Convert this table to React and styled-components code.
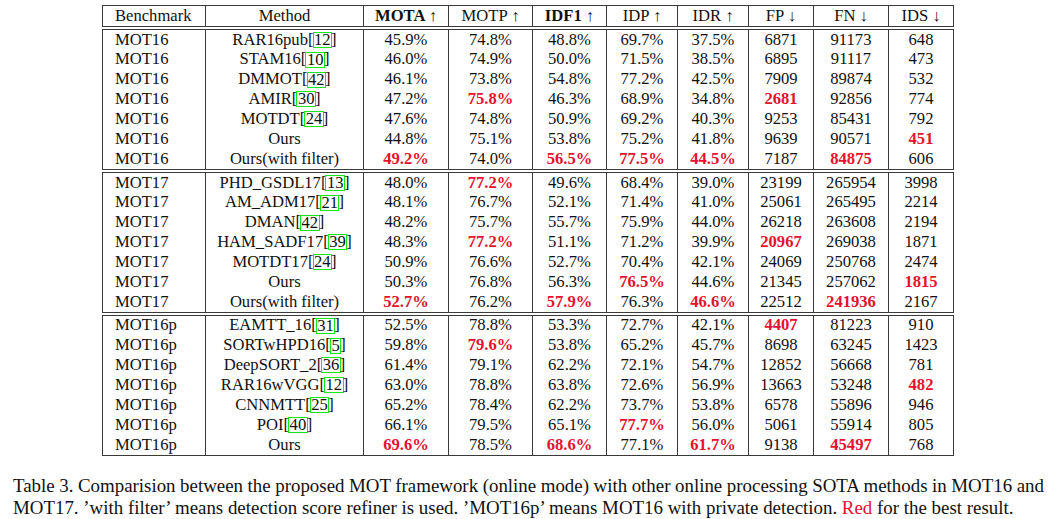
import React from 'react';
import styled, { createGlobalStyle } from 'styled-components';

const GlobalStyle = createGlobalStyle`
  body {
    margin: 0;
    background: #fff;
    color: #111;
    font-family: "Liberation Serif", "Times New Roman", serif;
  }
`;

const COLS = '102px 158px 85px 84px 74px 71px 71px 65px 75px 65px';

const Page = styled.div`
  width: 1060px;
  height: 519px;
  padding: 5px 0 0 0;
  box-sizing: border-box;
  overflow: hidden;
`;

const Table = styled.div`
  margin-left: 102px;
  width: 852px;
  display: flex;
  flex-direction: column;
  gap: 2px;
`;

const Block = styled.div`
  border: 1px solid #3a3a3a;
`;

const Row = styled.div`
  display: grid;
  grid-template-columns: ${COLS};
  height: ${(p) => (p.head ? '20px' : '19.85px')};
`;

const Cell = styled.div`
  display: flex;
  align-items: center;
  justify-content: ${(p) => (p.left ? 'flex-start' : 'center')};
  padding-left: ${(p) => (p.left ? '12px' : '0')};
  border-left: ${(p) => (p.first ? 'none' : '1px solid #3a3a3a')};
  font-size: 16.6px;
  line-height: 1;
  white-space: nowrap;
  font-weight: ${(p) => (p.bold ? 700 : 400)};
  color: ${(p) => (p.best ? '#e3122e' : '#111')};
`;

const Cite = styled.span`
  border: 1px solid #19e619;
  padding: 0 0.5px;
  margin: 0 -1px;
  line-height: 14px;
`;

const Caption = styled.div`
  margin: 19px 0 0 13px;
  width: 1031px;
  font-size: 18.9px;
  color: #111;
`;

const Line = styled.div`
  line-height: 22px;
  white-space: nowrap;
  word-spacing: ${(p) => (p.justify ? '-1.5px' : '0')};
  text-align: ${(p) => (p.justify ? 'justify' : 'left')};
  text-align-last: ${(p) => (p.justify ? 'justify' : 'left')};
`;

const Red = styled.span`
  color: #e3122e;
`;

const HEAD = [
  ['Benchmark', false],
  ['Method', false],
  ['MOTA ↑', true],
  ['MOTP ↑', false],
  ['IDF1 ↑', true],
  ['IDP ↑', false],
  ['IDR ↑', false],
  ['FP ↓', false],
  ['FN ↓', false],
  ['IDS ↓', false],
];

// '*' prefix marks the best value (red bold)
const SECTIONS = [
  [
    ['MOT16', 'RAR16pub', '12', '45.9%', '74.8%', '48.8%', '69.7%', '37.5%', '6871', '91173', '648'],
    ['MOT16', 'STAM16', '10', '46.0%', '74.9%', '50.0%', '71.5%', '38.5%', '6895', '91117', '473'],
    ['MOT16', 'DMMOT', '42', '46.1%', '73.8%', '54.8%', '77.2%', '42.5%', '7909', '89874', '532'],
    ['MOT16', 'AMIR', '30', '47.2%', '*75.8%', '46.3%', '68.9%', '34.8%', '*2681', '92856', '774'],
    ['MOT16', 'MOTDT', '24', '47.6%', '74.8%', '50.9%', '69.2%', '40.3%', '9253', '85431', '792'],
    ['MOT16', 'Ours', '', '44.8%', '75.1%', '53.8%', '75.2%', '41.8%', '9639', '90571', '*451'],
    ['MOT16', 'Ours(with filter)', '', '*49.2%', '74.0%', '*56.5%', '*77.5%', '*44.5%', '7187', '*84875', '606'],
  ],
  [
    ['MOT17', 'PHD_GSDL17', '13', '48.0%', '*77.2%', '49.6%', '68.4%', '39.0%', '23199', '265954', '3998'],
    ['MOT17', 'AM_ADM17', '21', '48.1%', '76.7%', '52.1%', '71.4%', '41.0%', '25061', '265495', '2214'],
    ['MOT17', 'DMAN', '42', '48.2%', '75.7%', '55.7%', '75.9%', '44.0%', '26218', '263608', '2194'],
    ['MOT17', 'HAM_SADF17', '39', '48.3%', '*77.2%', '51.1%', '71.2%', '39.9%', '*20967', '269038', '1871'],
    ['MOT17', 'MOTDT17', '24', '50.9%', '76.6%', '52.7%', '70.4%', '42.1%', '24069', '250768', '2474'],
    ['MOT17', 'Ours', '', '50.3%', '76.8%', '56.3%', '*76.5%', '44.6%', '21345', '257062', '*1815'],
    ['MOT17', 'Ours(with filter)', '', '*52.7%', '76.2%', '*57.9%', '76.3%', '*46.6%', '22512', '*241936', '2167'],
  ],
  [
    ['MOT16p', 'EAMTT_16', '31', '52.5%', '78.8%', '53.3%', '72.7%', '42.1%', '*4407', '81223', '910'],
    ['MOT16p', 'SORTwHPD16', '5', '59.8%', '*79.6%', '53.8%', '65.2%', '45.7%', '8698', '63245', '1423'],
    ['MOT16p', 'DeepSORT_2', '36', '61.4%', '79.1%', '62.2%', '72.1%', '54.7%', '12852', '56668', '781'],
    ['MOT16p', 'RAR16wVGG', '12', '63.0%', '78.8%', '63.8%', '72.6%', '56.9%', '13663', '53248', '*482'],
    ['MOT16p', 'CNNMTT', '25', '65.2%', '78.4%', '62.2%', '73.7%', '53.8%', '6578', '55896', '946'],
    ['MOT16p', 'POI', '40', '66.1%', '79.5%', '65.1%', '*77.7%', '56.0%', '5061', '55914', '805'],
    ['MOT16p', 'Ours', '', '*69.6%', '78.5%', '*68.6%', '77.1%', '*61.7%', '9138', '*45497', '768'],
  ],
];

const Method = ({ name, cite }) => (
  <Cell>
    {name}
    {cite && (
      <>
        [<Cite>{cite}</Cite>]
      </>
    )}
  </Cell>
);

const DataRow = ({ row }) => {
  const [bench, name, cite, ...vals] = row;
  return (
    <Row>
      <Cell first left>
        {bench}
      </Cell>
      <Method name={name} cite={cite} />
      {vals.map((v, i) => {
        const best = v.startsWith('*');
        return (
          <Cell key={i} best={best} bold={best}>
            {best ? v.slice(1) : v}
          </Cell>
        );
      })}
    </Row>
  );
};

export default function App() {
  return (
    <Page>
      <GlobalStyle />
      <Table>
        <Block>
          <Row head>
            {HEAD.map(([label, bold], i) => (
              <Cell key={label} first={i === 0} left={i === 0} bold={bold}>
                {label}
              </Cell>
            ))}
          </Row>
        </Block>
        {SECTIONS.map((rows, s) => (
          <Block key={s}>
            {rows.map((r, i) => (
              <DataRow key={i} row={r} />
            ))}
          </Block>
        ))}
      </Table>
      <Caption>
        <Line justify>
          Table 3. Comparision between the proposed MOT framework (online mode) with other online
          processing SOTA methods in MOT16 and
        </Line>
        <Line>
          MOT17. ’with filter’ means detection score refiner is used. ’MOT16p’ means MOT16 with
          private detection. <Red>Red</Red> for the best result.
        </Line>
      </Caption>
    </Page>
  );
}
